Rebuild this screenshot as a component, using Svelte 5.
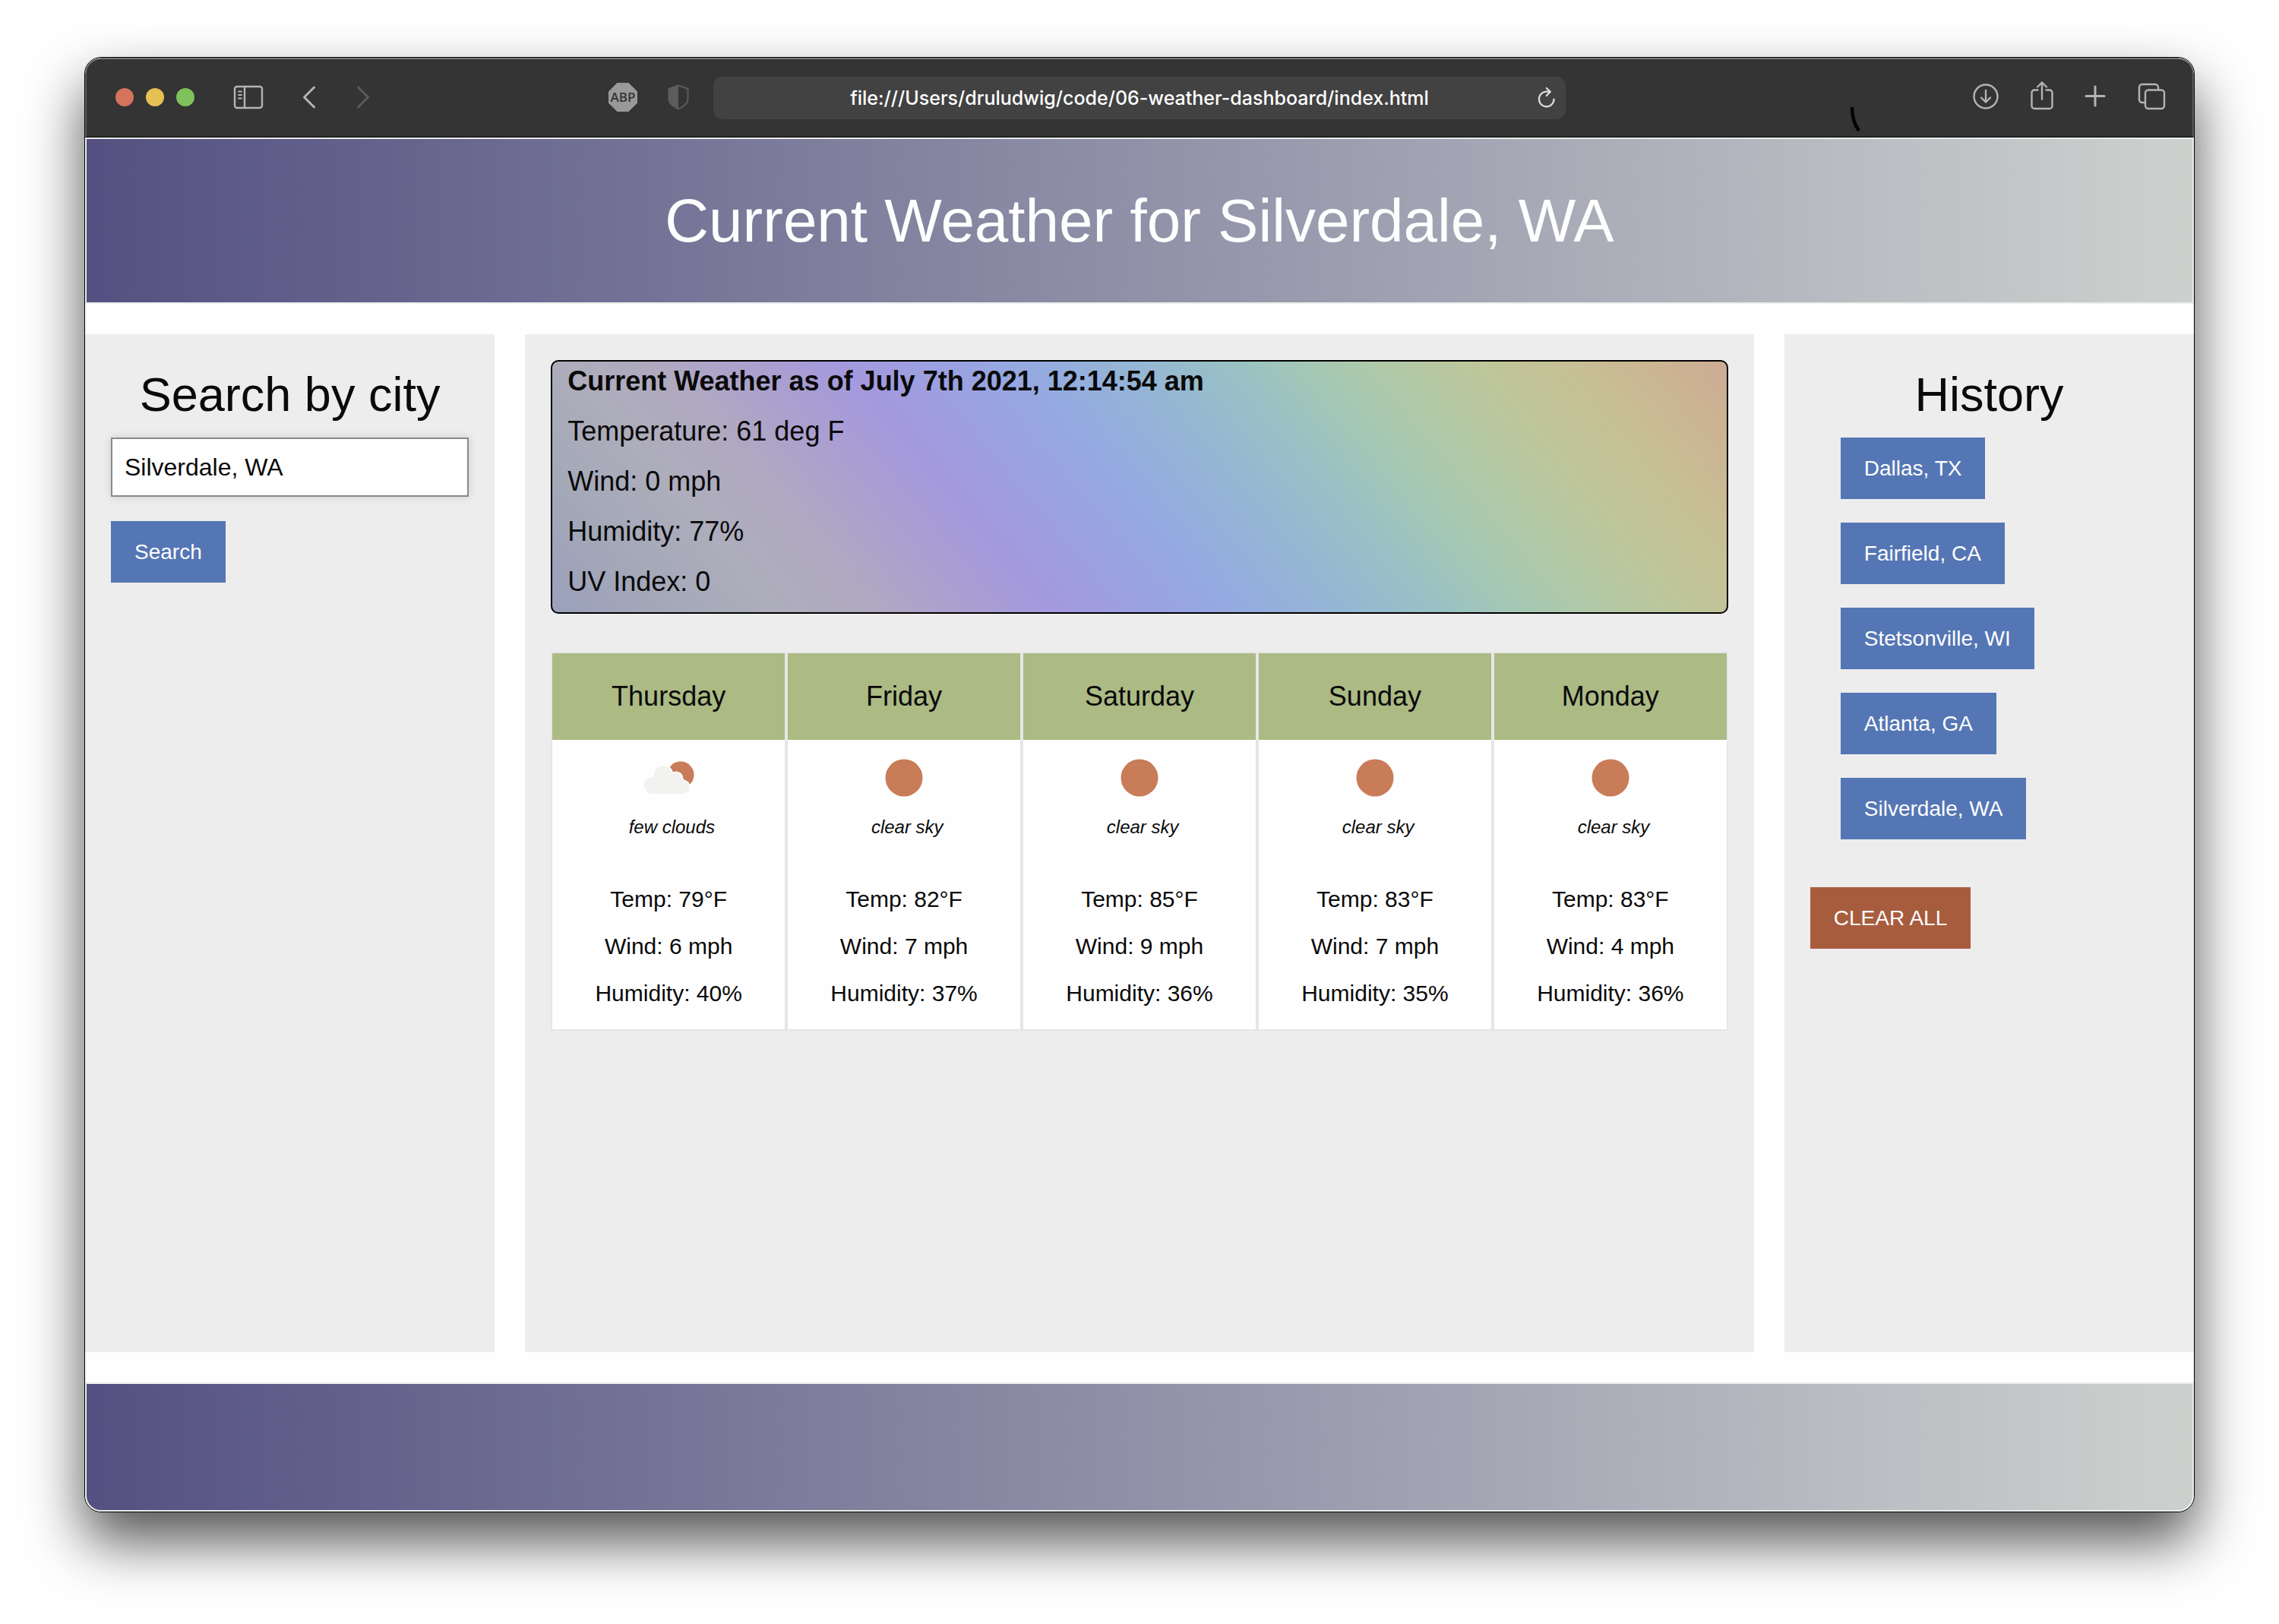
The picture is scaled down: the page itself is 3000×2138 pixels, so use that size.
<script>
  let city = $state('Silverdale, WA');

  const history = ['Dallas, TX', 'Fairfield, CA', 'Stetsonville, WI', 'Atlanta, GA', 'Silverdale, WA'];

  const current = ['Temperature: 61 deg F', 'Wind: 0 mph', 'Humidity: 77%', 'UV Index: 0'];

  const forecast = [
    { day: 'Thursday', sky: 'few clouds', temp: 79, wind: 6, humidity: 40 },
    { day: 'Friday', sky: 'clear sky', temp: 82, wind: 7, humidity: 37 },
    { day: 'Saturday', sky: 'clear sky', temp: 85, wind: 9, humidity: 36 },
    { day: 'Sunday', sky: 'clear sky', temp: 83, wind: 7, humidity: 35 },
    { day: 'Monday', sky: 'clear sky', temp: 83, wind: 4, humidity: 36 }
  ];
</script>

<div class="desktop">
  <div class="window">
    <div class="toolbar">
      <div class="tools start">
        <div class="lights">
          <button class="light close" aria-label="Close"></button>
          <button class="light minimize" aria-label="Minimize"></button>
          <button class="light zoom" aria-label="Zoom"></button>
        </div>
        <button class="tool sidebar" aria-label="Show sidebar">
          <svg width="40" height="32" viewBox="0 0 40 32" fill="none" stroke="#b4b4b4" stroke-width="2.4" stroke-linecap="round">
            <rect x="2" y="2" width="36" height="28" rx="3" />
            <path d="M15 2v28" />
            <path d="M7 8.5h4M7 13h4M7 17.5h4" stroke-width="1.8" />
          </svg>
        </button>
        <div class="arrows">
          <button class="tool" aria-label="Back">
            <svg width="20" height="32" viewBox="0 0 20 32" fill="none" stroke="#b4b4b4" stroke-width="3" stroke-linecap="round" stroke-linejoin="round">
              <path d="M16.500 3L3.500 16l13 13" />
            </svg>
          </button>
          <button class="tool" aria-label="Forward" disabled>
            <svg width="20" height="32" viewBox="0 0 20 32" fill="none" stroke="#5a5a5a" stroke-width="3" stroke-linecap="round" stroke-linejoin="round">
              <path d="M3.500 3l13 13-13 13" />
            </svg>
          </button>
        </div>
        <div class="extensions">
          <button class="tool" aria-label="Ad blocker">
            <svg width="38" height="38" viewBox="0 0 38 38">
              <path d="M11.500 0h15L38 11.500v15L26.500 38h-15L0 26.500v-15z" fill="#999" />
              <text x="19" y="25" text-anchor="middle" class="abp">ABP</text>
            </svg>
          </button>
          <button class="tool" aria-label="Privacy report">
            <svg width="28" height="34" viewBox="0 0 28 34">
              <path d="M14 1.500L26.500 6v14c0 6-6 9.500-12.500 12.500C7.500 29.500 1.500 26 1.500 20V6z" fill="none" stroke="#5c5c5c" stroke-width="2" stroke-linejoin="round" />
              <path d="M14 1.500v31C7.500 29.500 1.500 26 1.500 20V6z" fill="#5c5c5c" />
            </svg>
          </button>
        </div>
      </div>

      <div class="address">
        <input class="url" aria-label="Address" value="file:///Users/druludwig/code/06-weather-dashboard/index.html" />
        <button class="tool reload" aria-label="Reload">
          <svg width="24" height="28" viewBox="0 0 24 28" fill="none" stroke="#dedede" stroke-width="2.200" stroke-linecap="round" stroke-linejoin="round">
            <path d="M21.500 15.500a9.800 9.800 0 1 1-9.800-9.800h4" />
            <path d="M11.800 1l5 4.700-5 5.200" />
          </svg>
        </button>
      </div>

      <div class="tools end">
        <svg class="mark" width="16" height="34" viewBox="0 0 16 34" fill="none" stroke="#000" stroke-width="4.500" aria-hidden="true">
          <path d="M3 1c0 12 3 23 9 31" />
        </svg>
        <button class="tool" aria-label="Downloads">
          <svg width="36" height="38" viewBox="0 0 36 38" fill="none" stroke="#b4b4b4" stroke-width="2.400" stroke-linecap="round" stroke-linejoin="round">
            <circle cx="18" cy="20" r="15.500" />
            <path d="M18 12v15M12 21.500l6 6 6-6" />
          </svg>
        </button>
        <button class="tool" aria-label="Share">
          <svg width="30" height="38" viewBox="0 0 30 38" fill="none" stroke="#b4b4b4" stroke-width="2.400" stroke-linecap="round" stroke-linejoin="round">
            <path d="M9.500 11.500H5a3.500 3.500 0 0 0-3.500 3.500v17.500A3.500 3.500 0 0 0 5 36h20a3.500 3.500 0 0 0 3.500-3.500V15a3.500 3.500 0 0 0-3.500-3.500h-4.500" />
            <path d="M15 23.500V1.500M9 7.500l6-6 6 6" />
          </svg>
        </button>
        <button class="tool" aria-label="New tab">
          <svg width="28" height="38" viewBox="0 0 28 38" fill="none" stroke="#b4b4b4" stroke-width="3" stroke-linecap="round">
            <path d="M14 7v25M2 19.500h24" />
          </svg>
        </button>
        <button class="tool" aria-label="Tab overview">
          <svg width="38" height="38" viewBox="0 0 38 38" fill="none" stroke="#b4b4b4" stroke-width="2.400" stroke-linejoin="round">
            <rect x="11" y="11.500" width="25" height="24.500" rx="4" />
            <path d="M11 28H7a4 4 0 0 1-4-4V8a4 4 0 0 1 4-4h17a4 4 0 0 1 4 4v3.500" />
          </svg>
        </button>
      </div>
    </div>

    <header class="banner">
      <h1>Current Weather for Silverdale, WA</h1>
    </header>

    <main class="columns">
      <section class="panel">
        <h2><label for="city">Search by city</label></h2>
        <input id="city" class="city" type="text" bind:value={city} />
        <button class="button">Search</button>
      </section>

      <section class="panel">
        <div class="current">
          <p><strong>Current Weather as of July 7th 2021, 12:14:54 am</strong></p>
          {#each current as line}
            <p>{line}</p>
          {/each}
        </div>

        <div class="forecast">
          {#each forecast as item}
            <article class="card">
              <h3>{item.day}</h3>
              <div class="details">
                <svg class="sky-icon" width="100" height="100" viewBox="0 0 100 100" aria-hidden="true">
                  {#if item.sky === 'few clouds'}
                    <circle cx="66" cy="46" r="17.500" fill="#c87c57" />
                    {#each ['halo', 'fill'] as layer}
                      <g class={layer}>
                        <circle cx="29" cy="60" r="11" />
                        <rect x="31" y="34" width="24" height="34" rx="12" />
                        <circle cx="60" cy="51" r="8" />
                        <circle cx="69" cy="62.500" r="8.500" />
                        <rect x="29" y="53" width="40" height="18" />
                      </g>
                    {/each}
                  {:else}
                    <circle cx="50" cy="50" r="24.500" fill="#c87c57" />
                  {/if}
                </svg>
                <p class="sky">&nbsp;<em>{item.sky}</em></p>
                <p>Temp: {item.temp}°F</p>
                <p>Wind: {item.wind} mph</p>
                <p>Humidity: {item.humidity}%</p>
              </div>
            </article>
          {/each}
        </div>
      </section>

      <section class="panel">
        <h2>History</h2>
        <ul class="history">
          {#each history as place}
            <li><button class="button">{place}</button></li>
          {/each}
        </ul>
        <button class="button alert">CLEAR ALL</button>
      </section>
    </main>

    <footer class="banner foot"></footer>
  </div>
</div>

<style>
  :global(body) {
    margin: 0;
    background: #fff;
  }

  .desktop,
  .desktop * {
    box-sizing: border-box;
  }

  .desktop {
    display: flex;
    min-height: 100vh;
    padding: 75px 111px 147px;
    font-family: 'Liberation Sans', Arial, sans-serif;
    color: #0a0a0a;
  }

  h1,
  h2,
  h3,
  p,
  ul {
    margin: 0;
    padding: 0;
    font-weight: 400;
  }

  button,
  input {
    font-family: inherit;
  }

  .window {
    flex: 1;
    min-width: 0;
    display: flex;
    flex-direction: column;
    overflow: hidden;
    border: 1px solid #000;
    border-radius: 22px;
    background: #fefefe;
    box-shadow: 0 38px 76px rgba(0, 0, 0, 0.68);
  }

  .toolbar {
    display: grid;
    grid-template-columns: 1fr 40.5% 1fr;
    align-items: center;
    height: 105px;
    border: 2px solid #5e5e5e;
    border-top-color: #777;
    border-bottom: 1px solid #000;
    border-radius: 21px 21px 0 0;
    background: #343434;
  }

  .tools {
    display: flex;
    align-items: center;
    height: 100%;
  }

  .start {
    padding: 0 32px 3px 38px;
  }

  .end {
    justify-content: flex-end;
    gap: 41px;
    padding: 0 35px 6px 0;
  }

  .lights {
    display: flex;
    gap: 16px;
  }

  .light {
    width: 24px;
    height: 24px;
    padding: 0;
    border: 0;
    border-radius: 50%;
  }

  .close {
    background: #d6735c;
  }

  .minimize {
    background: #e6c053;
  }

  .zoom {
    background: #7fc25b;
  }

  .tool {
    display: flex;
    padding: 0;
    border: 0;
    background: none;
  }

  .sidebar {
    margin-left: 51px;
  }

  .arrows {
    display: flex;
    gap: 51px;
    margin-left: 50px;
  }

  .extensions {
    display: flex;
    align-items: center;
    gap: 40px;
    margin-left: auto;
  }

  .abp {
    font: 600 17px 'Open Sans', sans-serif;
    fill: #343434;
  }

  .address {
    display: flex;
    align-items: center;
    height: 56px;
    padding: 0 13px 0 49px;
    border-radius: 12px;
    background: #424242;
  }

  .url {
    flex: 1;
    min-width: 0;
    padding: 0;
    border: 0;
    outline: 0;
    background: none;
    color: #fff;
    font: 500 25px/32px Inter, sans-serif;
    text-align: center;
  }

  .reload {
    margin-left: 12px;
  }

  .mark {
    align-self: flex-end;
    margin: 0 auto 0 374px;
  }

  .banner {
    padding: 52px 34px 51px;
    border: 2px solid #ededed;
    background: linear-gradient(90deg, #545182, #cdd1ce);
    color: #fefefe;
    text-align: center;
  }

  h1 {
    font-size: 80px;
    line-height: 112px;
  }

  .foot {
    height: 170px;
    border-radius: 0 0 21px 21px;
  }

  .columns {
    flex: 1;
    display: grid;
    grid-template-columns: minmax(0, 1fr) minmax(0, 3fr) minmax(0, 1fr);
    gap: 40px;
    padding: 40px 0;
  }

  .panel {
    padding: 34px;
    background: #ededed;
  }

  h2 {
    padding-top: 2px;
    margin-bottom: 14px;
    font-size: 63px;
    line-height: 86px;
    text-align: center;
  }

  .city {
    display: block;
    width: 100%;
    height: 78px;
    margin-bottom: 32px;
    padding: 0 16px;
    border: 2px solid #8a8a8a;
    outline: 0;
    background: #fefefe;
    box-shadow: 0 0 10px #cacaca;
    color: #0a0a0a;
    font-size: 32px;
  }

  .button {
    display: block;
    height: 81px;
    padding: 0 31px;
    border: 0;
    background: #5576b4;
    color: #fefefe;
    font-size: 28px;
    line-height: 29px;
  }

  .alert {
    background: #a85c3e;
  }

  .current {
    padding: 0 20px;
    border: 2px solid #000;
    border-radius: 10px;
    background: linear-gradient(
      50deg,
      #9ba0bd 0%,
      #a3a8b8 8%,
      #adadbb 16%,
      #b0a9c0 23%,
      #ab9fd0 30%,
      #a499dd 36%,
      #9ba1e2 43%,
      #94abe0 50%,
      #95b6d4 57%,
      #99c1c5 64%,
      #a5c8b3 70%,
      #b2c9a6 76%,
      #bec69a 82%,
      #c7bf95 89%,
      #ccb292 96%,
      #cbac96 100%
    );
  }

  .current p {
    padding-bottom: 14px;
    font-size: 36px;
    line-height: 52px;
  }

  .current strong {
    font-weight: 700;
  }

  .forecast {
    display: grid;
    grid-template-columns: repeat(5, minmax(0, 1fr));
    margin-top: 50px;
  }

  .card {
    border: 2px solid #e6e6e6;
    background: #fefefe;
    text-align: center;
  }

  h3 {
    padding: 32px 8px;
    background: #acba84;
    font-size: 36px;
    line-height: 50px;
  }

  .details {
    padding-bottom: 16px;
    font-size: 30px;
    line-height: 62px;
  }

  .sky-icon {
    display: block;
    margin: 0 auto;
  }

  .halo {
    fill: #fefefe;
    stroke: #fefefe;
    stroke-width: 3px;
  }

  .fill {
    fill: #f2f2f1;
  }

  .sky {
    padding-bottom: 51px;
    line-height: 26px;
  }

  .sky em {
    font-size: 24px;
  }

  .history {
    display: flex;
    flex-direction: column;
    gap: 31px;
    margin: 0 0 63px 40px;
    list-style: none;
  }
</style>
